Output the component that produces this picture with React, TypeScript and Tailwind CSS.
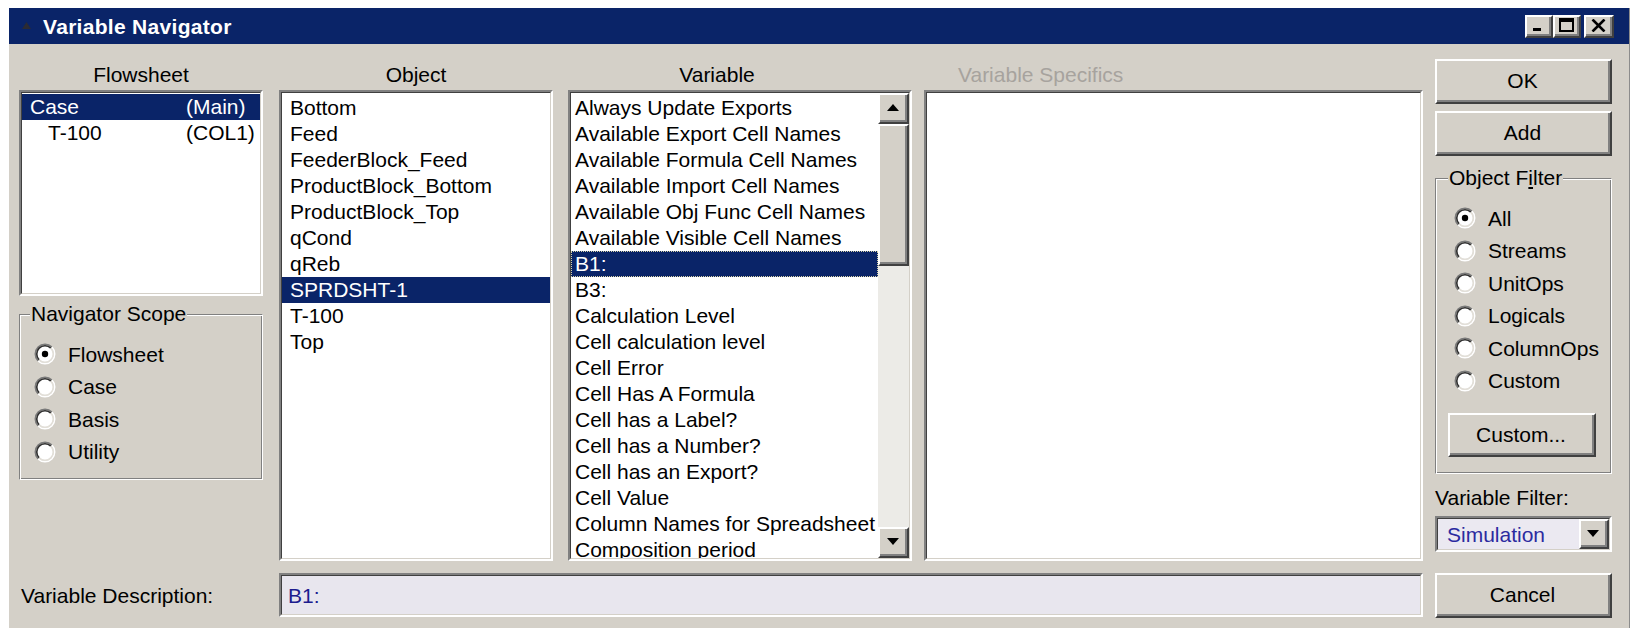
import React from "react";

const FONT = "font-['Liberation_Sans',Arial,sans-serif]";

type Kids = { children?: React.ReactNode; className?: string };

// Classic 3D sunken frame (list boxes, edit fields)
function Sunken({ children, className = "", innerClass = "bg-white" }: Kids & { innerClass?: string }) {
  return (
    <div className={"border-2 border-t-[#808080] border-l-[#808080] border-r-white border-b-white " + className}>
      <div className={"h-full border border-t-[#404040] border-l-[#404040] border-r-[#d4d0c8] border-b-[#d4d0c8] overflow-hidden " + innerClass}>
        {children}
      </div>
    </div>
  );
}

// Classic 3D raised frame (push buttons, scroll arrows)
function Raised({ children, className = "" }: Kids) {
  return (
    <div className={"border-2 border-t-white border-l-white border-r-[#404040] border-b-[#404040] bg-[#d4d0c8] " + className}>
      <div className="h-full border-r-2 border-b-2 border-r-[#808080] border-b-[#808080] flex items-center justify-center">
        {children}
      </div>
    </div>
  );
}

function PushButton({ label, className = "" }: { label: React.ReactNode; className?: string }) {
  return (
    <Raised className={className}>
      <span className="text-[21px] text-black leading-none">{label}</span>
    </Raised>
  );
}

function Radio({ on = false }: { on?: boolean }) {
  return (
    <svg width="22" height="22" viewBox="0 0 22 22" className="shrink-0">
      <circle cx="11" cy="11" r="8.5" fill="#fff" />
      <path d="M4.106 17.894 A9.75 9.75 0 0 1 17.894 4.106" stroke="#7a7a7a" strokeWidth="1.6" fill="none" />
      <path d="M17.894 4.106 A9.75 9.75 0 0 1 4.106 17.894" stroke="#ffffff" strokeWidth="1.6" fill="none" />
      <path d="M5.166 16.834 A8.25 8.25 0 0 1 16.834 5.166" stroke="#303030" strokeWidth="1.6" fill="none" />
      <path d="M16.834 5.166 A8.25 8.25 0 0 1 5.166 16.834" stroke="#e2dfd8" strokeWidth="1.6" fill="none" />
      {on && <circle cx="11" cy="11" r="3.2" fill="#000" />}
    </svg>
  );
}

function RadioRow({ label, on = false, radioClass, labelClass }: { label: string; on?: boolean; radioClass: string; labelClass: string }) {
  return (
    <div className="h-[32.5px] flex items-center">
      <div className={radioClass}>
        <Radio on={on} />
      </div>
      <span className={"text-[21px] leading-none text-black " + labelClass}>{label}</span>
    </div>
  );
}

function TriUp() {
  return (
    <svg width="12" height="7" viewBox="0 0 12 7">
      <path d="M6 0 L12 7 L0 7 Z" fill="#000" />
    </svg>
  );
}

function TriDown() {
  return (
    <svg width="12" height="7" viewBox="0 0 12 7">
      <path d="M0 0 L12 0 L6 7 Z" fill="#000" />
    </svg>
  );
}

function TitleBar() {
  return (
    <div className="h-[36px] shrink-0 bg-[#0a2468] flex items-center">
      <svg width="9" height="7" viewBox="0 0 9 7" className="ml-[13px] mt-[-2px]">
        <path d="M4.5 0 L9 7 L0 7 Z" fill="#2b2b33" />
      </svg>
      <span className="ml-[12px] text-white font-bold text-[21px] leading-none tracking-[0.3px]">Variable Navigator</span>
      <div className="ml-auto mr-[15px] flex items-center">
        <Raised className="w-[28px] h-[23px]">
          <svg width="14" height="12" viewBox="0 0 14 12">
            <rect x="2" y="9" width="8" height="3" fill="#000" />
          </svg>
        </Raised>
        <Raised className="w-[28px] h-[23px]">
          <svg width="15" height="14" viewBox="0 0 15 14">
            <rect x="1" y="1" width="13" height="12" fill="none" stroke="#000" strokeWidth="2" />
            <rect x="0" y="0" width="15" height="4" fill="#000" />
          </svg>
        </Raised>
        <Raised className="w-[30px] h-[23px] ml-[3px]">
          <svg width="15" height="13" viewBox="0 0 15 13">
            <path d="M1.5 0.5 L13.5 12.5 M13.5 0.5 L1.5 12.5" stroke="#000" strokeWidth="2.6" />
          </svg>
        </Raised>
      </div>
    </div>
  );
}

const objects = [
  "Bottom",
  "Feed",
  "FeederBlock_Feed",
  "ProductBlock_Bottom",
  "ProductBlock_Top",
  "qCond",
  "qReb",
  "SPRDSHT-1",
  "T-100",
  "Top",
];

const variables = [
  "Always Update Exports",
  "Available Export Cell Names",
  "Available Formula Cell Names",
  "Available Import Cell Names",
  "Available Obj Func Cell Names",
  "Available Visible Cell Names",
  "B1:",
  "B3:",
  "Calculation Level",
  "Cell calculation level",
  "Cell Error",
  "Cell Has A Formula",
  "Cell has a Label?",
  "Cell has a Number?",
  "Cell has an Export?",
  "Cell Value",
  "Column Names for Spreadsheet",
  "Composition period",
];

function Header({ children, className = "" }: Kids) {
  return <div className={"h-[31px] flex items-center text-[21px] leading-none " + className}>{children}</div>;
}

function FlowsheetColumn() {
  return (
    <div className="w-[244px] shrink-0 flex flex-col">
      <Header className="justify-center text-black">Flowsheet</Header>
      <Sunken className="h-[206px]">
        <div className="pt-[1px] text-[21px] leading-[26px]">
          <div className="flex bg-[#0a2468] text-white pl-[8px]">
            <span className="w-[156px]">Case</span>
            <span>(Main)</span>
          </div>
          <div className="flex text-black pl-[8px]">
            <span className="w-[156px] pl-[18px]">T-100</span>
            <span>(COL1)</span>
          </div>
        </div>
      </Sunken>
      <fieldset className="mt-[5px] h-[179px] border border-t-[#808080] border-l-[#808080] border-r-white border-b-white shadow-[inset_1px_1px_0_#ffffff,inset_-1px_-1px_0_#808080] px-0 pb-0">
        <legend className="ml-[10px] px-[1px] text-[21px] leading-[26px] text-black bg-[#d4d0c8]">Navigator Scope</legend>
        <div className="pt-[11px]">
          <RadioRow label="Flowsheet" on radioClass="ml-[14px]" labelClass="ml-[12px]" />
          <RadioRow label="Case" radioClass="ml-[14px]" labelClass="ml-[12px]" />
          <RadioRow label="Basis" radioClass="ml-[14px]" labelClass="ml-[12px]" />
          <RadioRow label="Utility" radioClass="ml-[14px]" labelClass="ml-[12px]" />
        </div>
      </fieldset>
    </div>
  );
}

function ObjectColumn() {
  return (
    <div className="w-[274px] shrink-0 ml-[16px] flex flex-col">
      <Header className="justify-center text-black">Object</Header>
      <Sunken className="h-[471px]">
        <div className="pt-[2px] text-[21px] leading-[26px]">
          {objects.map((o) => (
            <div
              key={o}
              className={
                o === "SPRDSHT-1" ? "pl-[8px] bg-[#0a2468] text-white whitespace-nowrap" : "pl-[8px] text-black whitespace-nowrap"
              }
            >
              {o}
            </div>
          ))}
        </div>
      </Sunken>
    </div>
  );
}

function VariableColumn() {
  return (
    <div className="w-[344px] shrink-0 ml-[15px] flex flex-col">
      <Header className="justify-center pr-[46px] text-black">Variable</Header>
      <Sunken className="h-[471px]">
        <div className="h-full flex">
          <div className="flex-1 min-w-0 pt-[2px] text-[21px] leading-[26px]">
            {variables.map((v) =>
              v === "B1:" ? (
                <div
                  key={v}
                  className="h-[26px] flex items-center pl-[3px] bg-[#0a2468] text-white border border-dotted border-[#d9d2a8] whitespace-nowrap"
                >
                  {v}
                </div>
              ) : (
                <div key={v} className="h-[26px] pl-[4px] text-black whitespace-nowrap overflow-hidden">
                  {v}
                </div>
              )
            )}
          </div>
          <div className="w-[31px] shrink-0 flex flex-col bg-[#ecebe7]">
            <Raised className="h-[31px] shrink-0">
              <TriUp />
            </Raised>
            <Raised className="h-[142px] shrink-0">
              <span />
            </Raised>
            <div className="flex-1" />
            <Raised className="h-[31px] shrink-0">
              <TriDown />
            </Raised>
          </div>
        </div>
      </Sunken>
    </div>
  );
}

function SpecificsColumn() {
  return (
    <div className="w-[499px] shrink-0 ml-[12px] flex flex-col">
      <Header className="pl-[34px] text-[#a7a39e]">Variable Specifics</Header>
      <Sunken className="h-[471px]" />
    </div>
  );
}

function RightColumn() {
  return (
    <div className="w-[177px] shrink-0 ml-[12px] flex flex-col">
      <PushButton label="OK" className="h-[45px]" />
      <PushButton label="Add" className="h-[45px] mt-[7px]" />
      <fieldset className="mt-[9px] h-[309px] border border-t-[#808080] border-l-[#808080] border-r-white border-b-white shadow-[inset_1px_1px_0_#ffffff,inset_-1px_-1px_0_#808080] px-0 pb-0">
        <legend className="ml-[12px] px-[1px] text-[21px] leading-[26px] text-black bg-[#d4d0c8]">
          Object F<u>i</u>lter
        </legend>
        <div className="pt-[11px]">
          <RadioRow label="All" on radioClass="ml-[18px]" labelClass="ml-[12px]" />
          <RadioRow label="Streams" radioClass="ml-[18px]" labelClass="ml-[12px]" />
          <RadioRow label="UnitOps" radioClass="ml-[18px]" labelClass="ml-[12px]" />
          <RadioRow label="Logicals" radioClass="ml-[18px]" labelClass="ml-[12px]" />
          <RadioRow label="ColumnOps" radioClass="ml-[18px]" labelClass="ml-[12px]" />
          <RadioRow label="Custom" radioClass="ml-[18px]" labelClass="ml-[12px]" />
        </div>
        <PushButton label="Custom..." className="ml-[12px] w-[148px] h-[44px] mt-[16px]" />
      </fieldset>
      <div className="mt-[11px] h-[26px] text-[21px] leading-[26px] text-black whitespace-nowrap">Variable Filter:</div>
      <Sunken className="mt-[5px] h-[36px]" innerClass="bg-[#ebe9f1]">
        <div className="h-full flex items-center">
          <span className="flex-1 pl-[9px] text-[21px] leading-none text-[#2b2ba0]">Simulation</span>
          <Raised className="w-[30px] h-full">
            <TriDown />
          </Raised>
        </div>
      </Sunken>
      <PushButton label="Cancel" className="h-[45px] mt-[21px]" />
    </div>
  );
}

export default function App() {
  return (
    <div className={"w-[1634px] h-[633px] bg-white pt-[8px] pl-[9px] " + FONT}>
      <div className="w-[1621px] h-[620px] bg-[#d4d0c8] flex flex-col border-r border-r-[#8c8c8c]">
        <TitleBar />
        <div className="flex flex-1 pt-[15px] pl-[10px]">
          <div className="w-[1404px] shrink-0 flex flex-col">
            <div className="flex">
              <FlowsheetColumn />
              <ObjectColumn />
              <VariableColumn />
              <SpecificsColumn />
            </div>
            <div className="mt-[12px] h-[44px] flex">
              <div className="w-[260px] shrink-0 flex items-center pl-[2px] text-[21px] leading-none text-black">
                Variable Description:
              </div>
              <Sunken className="flex-1" innerClass="bg-[#e8e6ee]">
                <div className="h-full flex items-center pl-[6px] text-[21px] leading-none text-[#1d1d8e]">B1:</div>
              </Sunken>
            </div>
          </div>
          <RightColumn />
        </div>
      </div>
    </div>
  );
}
